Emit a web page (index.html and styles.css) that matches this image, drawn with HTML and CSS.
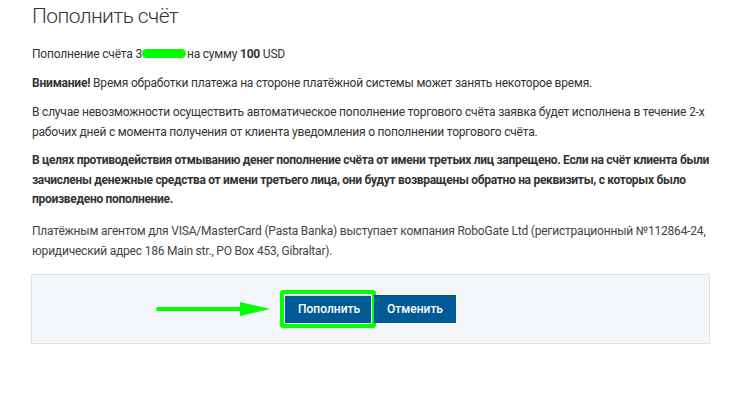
FILE: index.html
```html
<!DOCTYPE html>
<html lang="ru">
<head>
<meta charset="utf-8">
<link rel="stylesheet" href="styles.css">
</head>
<body>
<div class="page">
  <h1 class="title">Пополнить счёт</h1>
  <p class="p p1">Пополнение счёта 3<span class="blob"></span>на сумму <b>100</b> USD</p>
  <p class="p"><b>Внимание!</b> Время обработки платежа на стороне платёжной системы может занять некоторое время.</p>
  <p class="p">В случае невозможности осуществить автоматическое пополнение торгового счёта заявка будет исполнена в течение <span class="nw">2-х</span> рабочих дней с момента получения от клиента уведомления о пополнении торгового счёта.</p>
  <p class="p strong">В целях противодействия отмыванию денег пополнение счёта от имени третьих лиц запрещено. Если на счёт клиента были зачислены денежные средства от имени третьего лица, они будут возвращены обратно на реквизиты, с которых было произведено пополнение.</p>
  <p class="p agent">Платёжным агентом для VISA/MasterCard (Pasta Banka) выступает компания RoboGate Ltd (регистрационный <span class="nw">№112864-24,</span> юридический адрес 186 Main str., PO Box 453, Gibraltar).</p>
  <div class="panel">
    <div class="actions">
      <span class="arrow">
        <svg width="116" height="16" viewBox="0 0 116 16"><line x1="2" y1="8" x2="86" y2="8" stroke="#00ff00" stroke-width="4" stroke-linecap="round"/><polygon points="84,1 114,8 84,15" fill="#00ff00"/></svg>
      </span>
      <button class="btn btn-primary">Пополнить<span class="hl"></span></button>
      <button class="btn">Отменить</button>
    </div>
  </div>
</div>
</body>
</html>
```
FILE: styles.css
```css
html, body { margin: 0; padding: 0; background: #fff; }
body { font-family: Roboto, "Liberation Sans", sans-serif; color: #333; }
.page { padding: 0 28px 0 32px; }
.title { margin: 0; padding-top: 3px; font-weight: 300; font-size: 21px; line-height: 26px; color: #333; letter-spacing: -0.6px; }
.p { margin: 0 0 9px; font-size: 12px; line-height: 20px; letter-spacing: -0.2px; }
.p1 { margin-top: 15px; }
.nw { white-space: nowrap; }
.strong { font-weight: bold; letter-spacing: -0.3px; line-height: 19.5px; }
.agent { margin-top: 11px; color: #444; }
.blob { display: inline-block; width: 44px; height: 9px; background: #00ff00; border-radius: 5px; vertical-align: 0; margin-right: 1px; }
.panel { margin: 13px 8px 0 -1px; height: 68px; background: #f4f7fa; border: 1px solid #dde3e8; display: flex; align-items: center; justify-content: center; }
.actions { display: flex; gap: 3px; position: relative; }
.btn { font-family: inherit; font-size: 12px; font-weight: 500; color: #fff; background: #005a96; border: 0; height: 28px; padding: 0 13px; position: relative; }
.btn-primary { width: 86px; border-top: 1px solid #cfe0ec; }
.hl { position: absolute; left: -5px; top: -6px; right: -5px; bottom: -5px; border: 4px solid #00ff00; border-radius: 3px; }
.arrow { position: absolute; right: calc(100% + 13px); top: 6px; line-height: 0; }
```
